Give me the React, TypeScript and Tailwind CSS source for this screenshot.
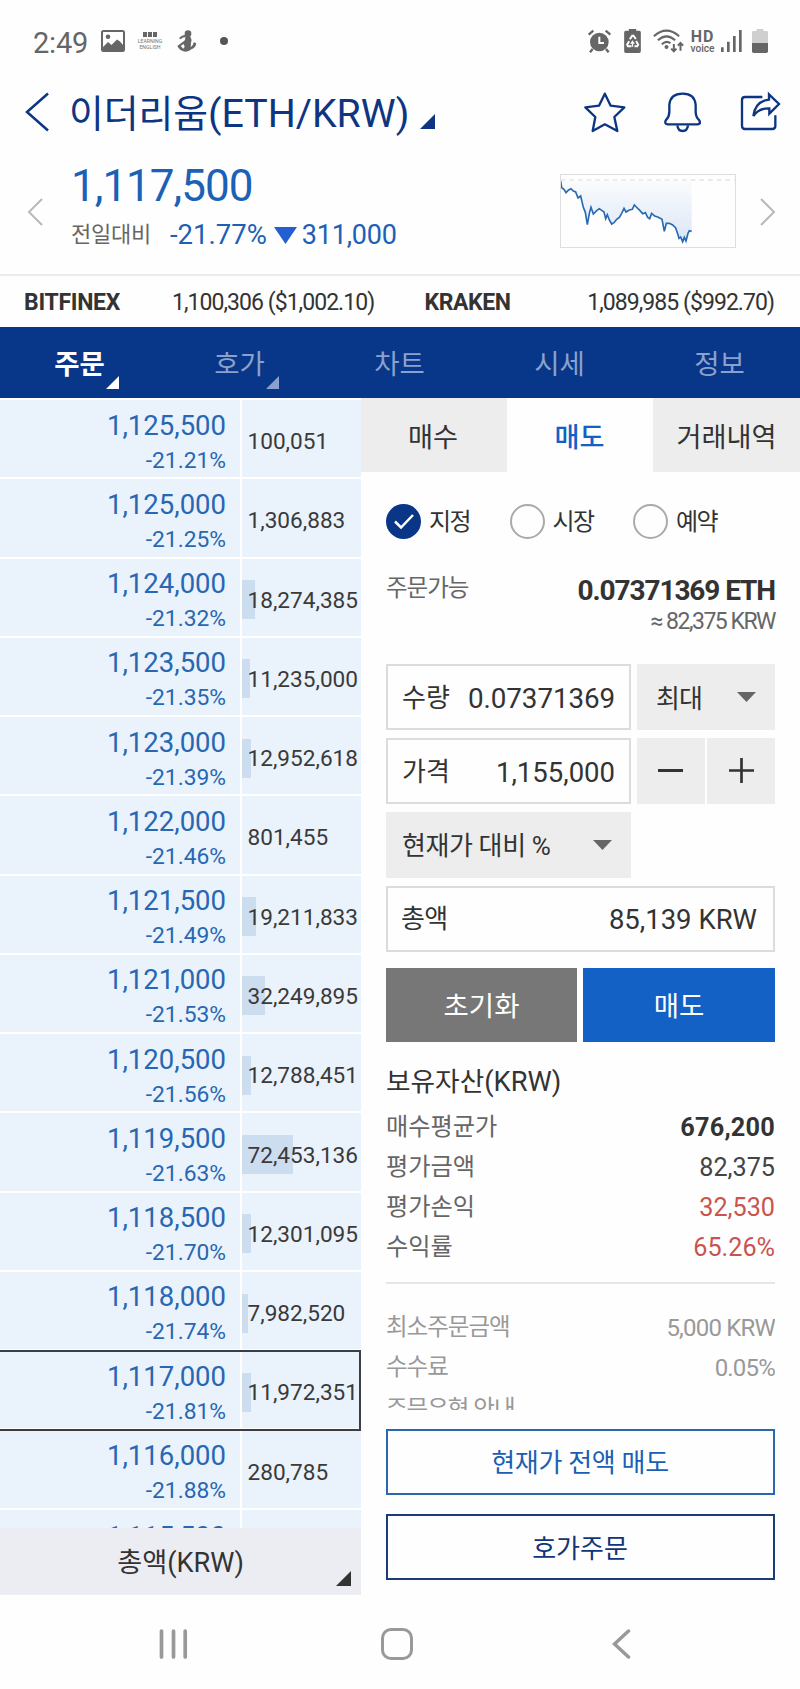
import React, { useState } from "react";
import { clsx } from "clsx";

type OrderRow = { price: string; rate: string; total: number };

const orders: OrderRow[] = [
    { price: "1,125,500", rate: "-21.21%", total: 100051 },
    { price: "1,125,000", rate: "-21.25%", total: 1306883 },
    { price: "1,124,000", rate: "-21.32%", total: 18274385 },
    { price: "1,123,500", rate: "-21.35%", total: 11235000 },
    { price: "1,123,000", rate: "-21.39%", total: 12952618 },
    { price: "1,122,000", rate: "-21.46%", total: 801455 },
    { price: "1,121,500", rate: "-21.49%", total: 19211833 },
    { price: "1,121,000", rate: "-21.53%", total: 32249895 },
    { price: "1,120,500", rate: "-21.56%", total: 12788451 },
    { price: "1,119,500", rate: "-21.63%", total: 72453136 },
    { price: "1,118,500", rate: "-21.70%", total: 12301095 },
    { price: "1,118,000", rate: "-21.74%", total: 7982520 },
    { price: "1,117,000", rate: "-21.81%", total: 11972351 },
    { price: "1,116,000", rate: "-21.88%", total: 280785 },
];

const tabs = ["주문", "호가", "차트", "시세", "정보"];

// bars narrower than a pixel or two are not worth drawing
const barWidth = (total: number) => (total < 2e6 ? 0 : (total / 1e6) * 0.71);

function Corner({ className }: { className?: string }) {
    return (
        <svg viewBox="0 0 10 10" className={className} fill="currentColor">
            <path d="M10 0V10H0Z" />
        </svg>
    );
}

function Caret({ className }: { className?: string }) {
    return (
        <svg
            viewBox="0 0 19 10"
            className={clsx("h-[10px] w-[19px] text-[#666]", className)}
            fill="currentColor">
            <path d="M0 0H19L9.5 10Z" />
        </svg>
    );
}

function StatusBar() {
    return (
        <div className="flex h-[82px] items-center pl-[33px] pr-8 text-[#666]">
            <span className="w-[68px] pt-1 text-[29px] leading-[34px] tracking-[-0.2px]">
                2:49
            </span>
            <svg viewBox="0 0 24 22" className="h-[22px] w-6">
                <rect
                    x="1"
                    y="1"
                    width="22"
                    height="20"
                    rx="1.5"
                    fill="none"
                    stroke="currentColor"
                    strokeWidth="2"
                />
                <circle cx="7" cy="6.8" r="2.3" fill="currentColor" />
                <path
                    d="M2 17l5-5 3.5 3L16 9.500l3 2 3 3.500v6H2z"
                    fill="currentColor"
                />
            </svg>
            <div className="ml-3 flex w-[26px] flex-col items-center text-[5.2px] leading-[6px] text-[#777]">
                <div className="mb-[1px] flex gap-[0.5px]">
                    <span className="h-[4.5px] w-[4.5px] bg-[#666]" />
                    <span className="h-[4.5px] w-[4.5px] bg-[#666]" />
                    <span className="h-[4.5px] w-[4.5px] bg-[#666]" />
                </div>
                <span>LEARNING</span>
                <span>ENGLISH</span>
            </div>
            <svg
                viewBox="0 0 60 66"
                className="ml-[14px] h-[22px] w-5"
                fill="currentColor">
                <circle cx="33" cy="11" r="10" />
                <path d="M25 14Q14 15 6 24L10 28Q18 21 27 21z" />
                <path d="M25 20h15q6 9 2 18l-1 14q8-4 9-15l8 3q-3 15-15 18-6 7-18 7Q8 63 1 48l19-14q6-4 5-14z" />
                <path d="M11 48l9-6 3 8-4 6z" className="text-white" />
            </svg>
            <span className="ml-[23px] size-[8px] rounded-full bg-[#555]" />

            <svg
                viewBox="0 0 75 72"
                className="ml-auto h-6 w-[25px]"
                fill="none"
                stroke="currentColor">
                <circle
                    cx="37"
                    cy="39"
                    r="28"
                    fill="currentColor"
                    stroke="none"
                />
                <path d="M5 17L19 5M70 17L56 5" strokeWidth="7" />
                <path d="M17 60l-8 10M57 60l8 10" strokeWidth="7" />
                <path d="M37 23V42H51" stroke="white" strokeWidth="6" />
            </svg>
            <svg
                viewBox="0 0 50 72"
                className="ml-[12px] h-6 w-[17px]"
                fill="currentColor">
                <path d="M14 0h22v5h9q5 0 5 5v57q0 5-5 5H5q-5 0-5-5V10q0-5 5-5h9z" />
                <path
                    d="M17 31l7-11h4l7 10M36 36l6 11-3 5h-8M22 52H11l-2-5 6-10"
                    fill="none"
                    stroke="white"
                    strokeWidth="6"
                />
                <path d="M25 34l7 10h-5v9h-4v-9h-5z" fill="white" />
            </svg>
            <svg
                viewBox="0 0 92 72"
                className="ml-[12px] h-6 w-[31px]"
                fill="none"
                stroke="currentColor"
                strokeWidth="6">
                <path d="M2 22Q40-12 78 22M14 34Q40 10 66 34M26 46Q40 33 52 43" />
                <circle cx="40" cy="54" r="6" fill="currentColor" stroke="none" />
                <path
                    d="M62 45V66M54 59l8 8 8-8M82 65V42M74 50l8-8 8 8"
                    strokeWidth="6"
                />
            </svg>
            <div className="ml-[6px] flex w-[25px] flex-col items-center">
                <span className="text-[16px] leading-[15px] font-bold tracking-[0.8px]">
                    HD
                </span>
                <span className="text-[10.200px] leading-[10px] font-medium">
                    voice
                </span>
            </div>
            <svg
                viewBox="0 0 63 66"
                className="ml-[6px] h-[22px] w-[21px]"
                stroke="currentColor"
                strokeWidth="8">
                <path d="M4 52V66M22 35V66M40 18V66M58 0V66" />
            </svg>
            <svg viewBox="0 0 48 72" className="ml-[10px] h-6 w-4">
                <path
                    d="M14 0h20v6h10q4 0 4 4v32H0V10q0-4 4-4h10z"
                    fill="#cfcfcf"
                />
                <path
                    d="M0 42h48v25q0 5-5 5H5q-5 0-5-5z"
                    fill="currentColor"
                />
            </svg>
        </div>
    );
}

function Header() {
    return (
        <div className="flex h-[60px] items-center pl-[25px] pr-[19px] text-[#0d3582]">
            <svg
                viewBox="0 0 24 40"
                className="h-10 w-6"
                fill="none"
                stroke="currentColor"
                strokeWidth="2.5">
                <path d="M23 1.500L2 20L23 38.500" />
            </svg>
            <h1 className="ml-[20px] pt-1 text-[39.300px] leading-[50px] whitespace-nowrap">
                <span className="text-[37.800px]">이더리움</span>(ETH/KRW)
            </h1>
            <Corner className="mt-[19px] ml-[11px] size-[15px]" />
            <svg
                viewBox="549 273 132 126"
                className="ml-auto h-[42px] w-[44px]"
                fill="none"
                stroke="currentColor"
                strokeWidth="7"
                strokeLinejoin="round">
                <path d="M614.500 281L632 317L673 322L643 351L652 393L614.500 373L578 393L586 351L556 322L597 317Z" />
            </svg>
            <svg
                viewBox="789 273 120 126"
                className="ml-[36px] h-[42px] w-10"
                fill="none"
                stroke="currentColor"
                strokeWidth="7">
                <path d="M803 373H893Q905 371 897 360Q887 350 887 335V315Q884 281 848 281Q811 281 808 315V335Q808 350 798 360Q791 371 803 373Z" />
                <path d="M832 376Q834 393 848 393Q862 393 864 376" />
            </svg>
            <svg
                viewBox="1020 273 123 126"
                className="ml-[37px] h-[42px] w-[41px]"
                fill="none"
                stroke="currentColor"
                strokeWidth="7">
                <path d="M1087 291H1035Q1026 291 1026 300V378Q1026 387 1035 387H1117Q1126 387 1126 378V346" />
                <path d="M1107 283L1137 312L1108 341V325Q1077 324 1060 348Q1066 303 1107 299Z" />
            </svg>
        </div>
    );
}

function MiniChart() {
    const line =
        "2,21 5,41 12,46 18,56 26,48 33,44 40,51 47,54 54,72 62,66 70,100 76,115 82,152 88,118 93,100 100,120 110,110 118,104 126,110 132,114 137,134 142,122 148,138 155,150 162,146 170,136 178,130 185,118 192,103 198,114 208,108 217,106 223,93 232,102 240,110 248,119 256,116 263,130 269,134 275,118 284,126 295,130 306,136 313,172 319,148 328,148 338,153 347,162 354,182 357,193 362,189 368,203 373,190 378,201 384,178 388,170 395,172";
    return (
        <svg
            viewBox="3 3 522 216"
            className="h-[74px] w-[176px] border border-[#dedede]">
            <defs>
                <linearGradient id="fade" x1="0" y1="0" x2="0" y2="1">
                    <stop offset="0" stopColor="#fafcfe" />
                    <stop offset="1" stopColor="#dbe6f5" />
                </linearGradient>
            </defs>
            <path
                d="M2 18H526"
                stroke="#e3e3e3"
                strokeWidth="4"
                strokeDasharray="14 12"
            />
            <polygon points={`2,20 ${line} 395,20`} fill="url(#fade)" />
            <polyline
                points={line}
                fill="none"
                stroke="#2a6ab2"
                strokeWidth="5"
            />
        </svg>
    );
}

function PriceSummary() {
    return (
        <div className="flex h-[132px] items-start pl-[27px]">
            <svg
                viewBox="0 0 16 28"
                className="mt-[56px] h-7 w-4"
                fill="none"
                stroke="#b9b9b9"
                strokeWidth="2">
                <path d="M15 1L2 14L15 27" />
            </svg>
            <div className="ml-[28px] w-[489px] pt-[17px] text-[#1b61b6]">
                <div className="text-[44px] leading-[54px] tracking-[-1px]">
                    1,117,500
                </div>
                <div className="mt-[5px] flex items-center text-[27.500px] leading-[34px]">
                    <span className="w-[99px] text-[22px] tracking-[-0.2px] text-[#666]">
                        전일대비
                    </span>
                    <span>-21.77%</span>
                    <svg
                        viewBox="0 0 23 17"
                        className="mr-[5px] ml-[7px] h-[17px] w-[23px]"
                        fill="#235fd0">
                        <path d="M0 0H23L11.500 17Z" />
                    </svg>
                    <span className="text-[27px] tracking-[-0.2px]">
                        311,000
                    </span>
                </div>
            </div>
            <div className="mt-8">
                <MiniChart />
            </div>
            <svg
                viewBox="0 0 16 28"
                className="mt-[56px] ml-[24px] h-7 w-4"
                fill="none"
                stroke="#b9b9b9"
                strokeWidth="2">
                <path d="M1 1L14 14L1 27" />
            </svg>
        </div>
    );
}

function OrderBook() {
    return (
        <div className="w-[361px] shrink-0">
            <div className="h-[1130px] overflow-hidden bg-white pt-[2px]">
                {orders.map((o) => (
                    <div
                        key={o.price}
                        className="relative flex h-[79.28px] gap-[2px] pb-[2px]">
                        <div className="w-[240px] bg-[#eaf2fb] pt-[8.500px] pr-[14px] text-right text-[#2767b3]">
                            <div className="text-[27.500px] leading-[34px]">
                                {o.price}
                            </div>
                            <div className="mt-1 text-[22.800px] leading-[28px]">
                                {o.rate}
                            </div>
                        </div>
                        <div className="flex flex-1 items-center bg-[#eaf2fb] pt-[5px]">
                            <div
                                className="h-[39px] bg-[#cdddf0]"
                                style={{ width: barWidth(o.total) }}
                            />
                            <span
                                className="pt-[2px] pl-[5.500px] text-[22.600px] leading-7 text-[#3a3a3a]"
                                style={{ marginLeft: -barWidth(o.total) }}>
                                {o.total.toLocaleString("en-US")}
                            </span>
                        </div>
                        {o.price === "1,117,000" && (
                            <div className="absolute inset-x-0 -top-px -bottom-px z-10 border-y-2 border-r-2 border-[#3b3f45]" />
                        )}
                    </div>
                ))}
                <div className="flex h-[79.28px] gap-[2px]">
                    <div className="w-[240px] bg-[#eaf2fb] pt-[10px] pr-[14px] text-right text-[27.500px] leading-[34px] text-[#2767b3]">
                        1,115,500
                    </div>
                    <div className="flex-1 bg-[#eaf2fb]" />
                </div>
            </div>
            <div className="relative flex h-[67px] items-center justify-center bg-[#ecedf2] pt-[4px] text-[27.200px] text-[#333]">
                총액(KRW)
                <Corner className="absolute right-[10px] bottom-[9px] size-[15px]" />
            </div>
        </div>
    );
}

function Radio({ label, checked }: { label: string; checked?: boolean }) {
    return (
        <div className="flex w-[123.500px] items-center text-[24px] tracking-[-1.6px] text-[#333]">
            {checked ? (
                <span className="grid size-[35px] place-items-center rounded-full bg-[#0a3688]">
                    <svg
                        viewBox="0 0 20 15"
                        className="h-[15px] w-5"
                        fill="none"
                        stroke="white"
                        strokeWidth="2.5">
                        <path d="M1 7.500L7 13.500L19 1" />
                    </svg>
                </span>
            ) : (
                <span className="size-[35px] rounded-full border-2 border-[#aaa]" />
            )}
            <span className="ml-[8px] pt-[1px]">{label}</span>
        </div>
    );
}

function Info({
    label,
    value,
    valueClass,
}: {
    label: string;
    value?: string;
    valueClass?: string;
}) {
    return (
        <div className="flex h-[40px] items-center justify-between">
            <span>{label}</span>
            <span className={valueClass}>{value}</span>
        </div>
    );
}

function OrderForm() {
    return (
        <div className="flex-1">
            <div className="flex h-[74px] text-[27.200px] text-[#333]">
                <div className="grid w-[146px] place-items-center bg-[#ededed] pt-[6px] pr-[2px]">
                    매수
                </div>
                <div className="grid w-[146px] place-items-center pt-[6px] pr-px font-medium text-[#1361c5]">
                    매도
                </div>
                <div className="grid flex-1 place-items-center bg-[#ededed] pt-[6px]">
                    거래내역
                </div>
            </div>

            <div className="pr-[25px] pl-[25px] text-[#333]">
                <div className="mt-[31px] flex h-[36px]">
                    <Radio label="지정" checked />
                    <Radio label="시장" />
                    <Radio label="예약" />
                </div>

                <div className="mt-[34px] flex h-[91px] justify-between">
                    <span className="text-[23.500px] leading-[30px] tracking-[-1px] text-[#666]">
                        주문가능
                    </span>
                    <div className="pt-[2px] text-right">
                        <div className="text-[28px] leading-[32px] font-bold tracking-[-1.100px]">
                            0.07371369 ETH
                        </div>
                        <div className="text-[23px] leading-[30px] tracking-[-1.500px] text-[#666]">
                            ≈ 82,375 KRW
                        </div>
                    </div>
                </div>

                <div className="grid gap-y-[8.500px] text-[26px]">
                    <div className="flex h-[65.500px] gap-[6px]">
                        <div className="flex w-[245px] items-center justify-between border-2 border-[#dcdcdc] pt-[4px] pr-[14px] pl-[14px]">
                            <span>수량</span>
                            <span className="text-[27.800px] tracking-[-0.1px]">
                                0.07371369
                            </span>
                        </div>
                        <div className="flex flex-1 items-center justify-between bg-[#ededed] pr-[19px] pl-[19px]">
                            <span className="pt-[5px] tracking-[-1px]">
                                최대
                            </span>
                            <Caret />
                        </div>
                    </div>
                    <div className="flex h-[65.500px] gap-[6px]">
                        <div className="flex w-[245px] items-center justify-between border-2 border-[#dcdcdc] pt-[4px] pr-[14px] pl-[14px]">
                            <span>가격</span>
                            <span className="text-[27.500px]">1,155,000</span>
                        </div>
                        <div className="flex flex-1 gap-[2.500px]">
                            <div className="grid flex-1 place-items-center bg-[#ededed]">
                                <span className="h-[3px] w-[25px] bg-[#333]" />
                            </div>
                            <div className="grid flex-1 place-items-center bg-[#ededed]">
                                <svg
                                    viewBox="0 0 25 25"
                                    className="size-[25px]"
                                    stroke="#333"
                                    strokeWidth="2.7">
                                    <path d="M12.500 0V25M0 12.500H25" />
                                </svg>
                            </div>
                        </div>
                    </div>
                    <div className="flex h-[65.500px] w-[245px] items-center justify-between bg-[#ededed] pr-[19px] pl-[16px] tracking-[-0.4px]">
                        <span className="pt-[4px]">현재가 대비 %</span>
                        <Caret />
                    </div>
                    <div className="flex h-[65.500px] items-center justify-between border-2 border-[#dcdcdc] pt-[2px] pr-[16px] pl-[13px]">
                        <span className="tracking-[-0.7px]">총액</span>
                        <span className="text-[27.500px]">85,139 KRW</span>
                    </div>
                </div>

                <div className="mt-[16.500px] flex h-[74px] gap-[6px] text-[27.500px] text-white">
                    <div className="grid w-[191px] place-items-center bg-[#777] pt-[4px]">
                        초기화
                    </div>
                    <div className="grid flex-1 place-items-center bg-[#1361c5] pt-[4px]">
                        매도
                    </div>
                </div>

                <div className="mt-[19.500px] text-[27.300px] leading-[40px]">
                    <span className="text-[26.700px]">보유자산</span>(KRW)
                </div>
                <div className="mt-[6px] text-[24.200px] text-[#666]">
                    <Info
                        label="매수평균가"
                        value="676,200"
                        valueClass="text-[25.300px] tracking-[0.2px] font-bold text-[#333]"
                    />
                    <Info
                        label="평가금액"
                        value="82,375"
                        valueClass="text-[25.200px] text-[#444]"
                    />
                    <Info
                        label="평가손익"
                        value="32,530"
                        valueClass="text-[25.200px] text-[#c9544f]"
                    />
                    <Info
                        label="수익률"
                        value="65.26%"
                        valueClass="text-[25.200px] text-[#c9544f]"
                    />
                </div>
                <div className="mt-[14px] h-[2px] bg-[#e6e6e6]" />
                <div className="mt-[24px] h-[102px] overflow-hidden text-[23.500px] tracking-[-1px] text-[#999]">
                    <Info
                        label="최소주문금액"
                        value="5,000 KRW"
                        valueClass="text-[24px] tracking-[-0.8px]"
                    />
                    <Info
                        label="수수료"
                        value="0.05%"
                        valueClass="text-[24px] tracking-[-0.8px]"
                    />
                    <div className="pt-[2px]">
                        <Info label="주문유형 안내" />
                    </div>
                </div>

                <div className="mt-[19px] grid h-[66px] place-items-center border-2 border-[#2968ad] pt-[4px] pr-px text-[26px] tracking-[-0.3px] text-[#1b5fb5]">
                    현재가 전액 매도
                </div>
                <div className="mt-[19px] grid h-[66px] place-items-center border-2 border-[#1a3c78] pt-[5px] pr-px text-[26px] text-[#123577]">
                    호가주문
                </div>
            </div>
        </div>
    );
}

export default function App() {
    const [active, setActive] = useState(0);

    return (
        <div className="h-[1689px] w-[800px] overflow-hidden bg-[#fefefe] [font-family:Roboto,'Noto_Sans_CJK_KR',sans-serif]">
            <StatusBar />
            <Header />
            <PriceSummary />
            <div className="flex h-[53px] items-center border-t-2 border-[#ececec] pt-[3px] pr-[26px] pl-[24px] text-[23px] tracking-[-0.950px] text-[#333]">
                <b className="w-[148px] tracking-[-0.3px]">BITFINEX</b>
                <span className="w-[252.500px]">1,100,306 ($1,002.10)</span>
                <b className="tracking-[-0.4px]">KRAKEN</b>
                <span className="ml-auto">1,089,985 ($992.70)</span>
            </div>
            <div className="grid h-[71px] grid-cols-5 bg-[#083688] text-[27.500px]">
                {tabs.map((tab, i) => (
                    <button
                        key={tab}
                        onClick={() => setActive(i)}
                        className={clsx(
                            "relative pt-[5px] pr-px",
                            active === i
                                ? "font-bold text-white"
                                : "text-[#8ba1cd]"
                        )}>
                        {tab}
                        {i < 2 && (
                            <Corner className="absolute right-[41px] bottom-[9px] size-[13px]" />
                        )}
                    </button>
                ))}
            </div>
            <div className="flex h-[1197px]">
                <OrderBook />
                <OrderForm />
            </div>
            <div className="flex h-[94px] items-center pt-[4px] pl-[159px]">
                <svg
                    viewBox="0 0 29 30"
                    className="h-[30px] w-[29px]"
                    stroke="#999"
                    strokeWidth="3.7"
                    strokeLinecap="round">
                    <path d="M2.500 2V28M14.500 2V28M26.200 2V28" />
                </svg>
                <span className="ml-[193px] size-[32px] rounded-[10px] border-[3.500px] border-[#999]" />
                <svg
                    viewBox="0 0 19 30"
                    className="ml-[199px] h-[30px] w-[19px]"
                    fill="none"
                    stroke="#999"
                    strokeWidth="3.500"
                    strokeLinecap="round">
                    <path d="M16.500 2L2.500 15L16.500 28" />
                </svg>
            </div>
        </div>
    );
}
